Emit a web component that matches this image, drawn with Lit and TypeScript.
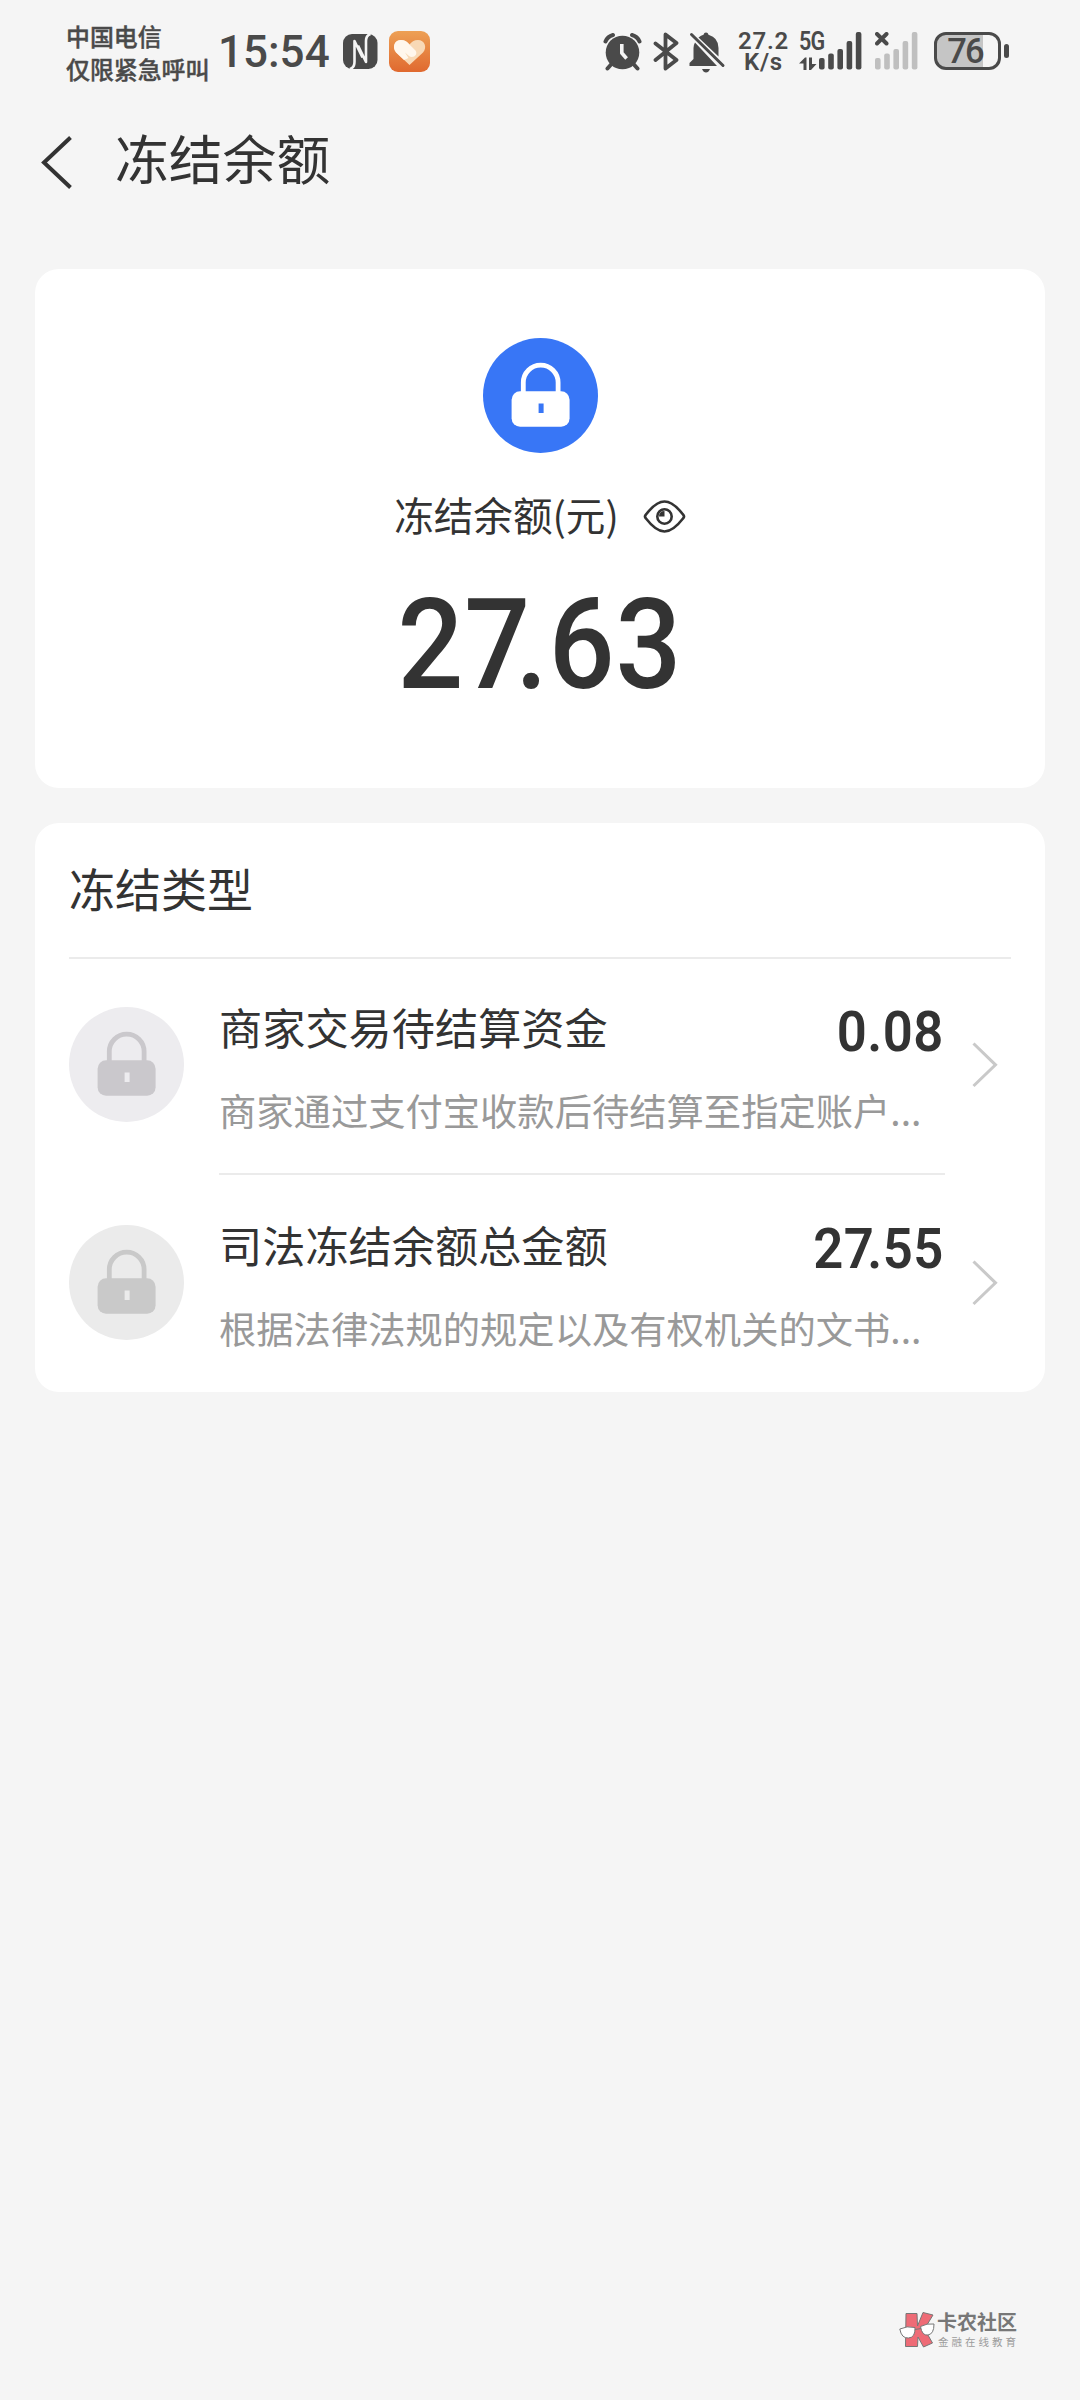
import { LitElement, html, css, svg } from "lit";
import { customElement, property } from "lit/decorators.js";

@customElement("lock-badge")
class LockBadge extends LitElement {
  @property() tone = "blue";
  static styles = css`
    :host { display: block; width: 115px; height: 115px; flex: none; }
    svg { display: block; }
    .blue { --disc: #3876f6; --lock: #ffffff; --hole: #3876f6; }
    .cool { --disc: #edecef; --lock: #cac8cc; --hole: #edecef; }
    .gray { --disc: #ebebeb; --lock: #c9c9c9; --hole: #ebebeb; }
    .disc { fill: var(--disc); }
    .body { fill: var(--lock); }
    .hole { fill: var(--hole); }
    .arc { fill: none; stroke: var(--lock); stroke-width: 4.8; }
  `;
  render() {
    return html`<svg class=${this.tone} width="115" height="115" viewBox="0 0 115 115">
      <circle class="disc" cx="57.5" cy="57.5" r="57.5" />
      <path class="arc" d="M40.3 56V44.5a17.4 17.4 0 0 1 34.8 0V56" />
      <rect class="body" x="28.6" y="53.3" width="58" height="35.5" rx="8.5" />
      <rect class="hole" x="55.6" y="65.5" width="5" height="9.5" />
    </svg>`;
  }
}

@customElement("money-text")
class MoneyText extends LitElement {
  @property() value = "";
  static styles = css`
    :host { display: block; font-family: Roboto, sans-serif; white-space: nowrap; letter-spacing: 0.008em; }
    .tuck { letter-spacing: -0.125em; }
  `;
  render() {
    // A seven before the decimal point is tucked over it.
    const at = this.value.indexOf("7.");
    return at < 0
      ? html`${this.value}`
      : html`${this.value.slice(0, at)}<span class="tuck">7</span>${this.value.slice(at + 1)}`;
  }
}

const bars = svg`
  <rect x="0" y="26" width="5.6" height="11.5" rx="2"/>
  <rect x="9.2" y="21.6" width="5.6" height="15.9" rx="2"/>
  <rect x="18.4" y="17" width="5.6" height="20.5" rx="2"/>
  <rect x="27.6" y="9" width="5.6" height="28.5" rx="2"/>
  <rect x="36.8" y="0" width="5.6" height="37.5" rx="2"/>`;

@customElement("status-bar")
class StatusBar extends LitElement {
  static styles = css`
    :host { display: flex; height: 104px; padding: 0 71px 0 66px; box-sizing: border-box; color: #4a4a4a; align-items: flex-start; }
    svg { display: block; flex: none; }
    .carrier { width: 144px; margin-top: 19px; font: 500 23.9px/33px "Noto Sans CJK SC", sans-serif; white-space: nowrap; -webkit-text-stroke: 0.4px #4a4a4a; }
    .time { margin: 26px 0 0 8px; width: 115px; font: 500 44px/53px Roboto, sans-serif; letter-spacing: 0; }
    .nfc { margin: 34px 0 0 10px; }
    .heart { margin: 31px 0 0 11px; }
    .right { display: flex; margin-left: auto; align-items: flex-start; }
    .alarm { margin-top: 32px; }
    .bt { margin: 32px 0 0 11px; }
    .bell { margin: 32px 0 0 10px; }
    .rate { margin: 31px 0 0 11px; width: 53px; text-align: center; font: 600 24px/21px Roboto, sans-serif; letter-spacing: 0.7px; }
    .net { margin: 29px 0 0 9px; width: 19px; }
    .gen { display: block; font: 600 25px/26px Roboto, sans-serif; letter-spacing: -1px; white-space: nowrap; transform: scaleX(0.86); transform-origin: 0 0; }
    .arrows { margin-top: 2px; }
    .sig { margin: 32px 0 0 1px; }
    .nosig { margin: 32px 0 0 13px; }
    .battery { margin-top: 32px; margin-left: 15px; display: flex; align-items: center; }
    .cell { width: 67px; height: 37.5px; box-sizing: border-box; border: 3.5px solid #4a4a4a; border-radius: 12px;
      background: linear-gradient(to right, #c5c5c5 46px, transparent 46px); padding-right: 5px; text-align: center;
      font: 500 34.5px/32px Roboto, sans-serif; letter-spacing: -1.8px; }
    .nub { width: 5px; height: 14px; border-radius: 2.5px; background: #4a4a4a; margin-left: 3px; }
  `;
  render() {
    return html`
      <div class="carrier">中国电信<br />仅限紧急呼叫</div>
      <div class="time">15:54</div>
      <svg class="nfc" width="35" height="35" viewBox="0 0 35 35">
        <rect width="34.5" height="35" rx="9" fill="#4a4a4a" />
        <path d="M7 35Q11.500 33.500 11.500 28V7L19.500 23.500M27.500 0Q23 1.500 23 7V28L15 11.500" fill="none" stroke="#f5f5f5" stroke-width="2.600" stroke-linejoin="round" />
      </svg>
      <svg class="heart" width="41" height="41" viewBox="0 0 41 41">
        <defs><linearGradient id="o" x1="0" y1="0" x2="0" y2="1"><stop offset="0" stop-color="#eda055" /><stop offset="1" stop-color="#e0692f" /></linearGradient></defs>
        <rect width="41" height="41" rx="9" fill="url(#o)" />
        <path d="M20.500 34L7.300 21.500C2.500 15.500 6 9 12 9c4 0 6.500 2 8.500 4.500C22.500 11 25 9 29 9c6.500 0 9.500 7 5 12.500z" fill="#f8d9b6" />
        <path d="M7 21.500C2.500 15.500 6 9 12 9c3.500 0 5.500 1.500 7.500 3.500l7 7c3 4-2.500 8.500-6.500 5.500l-4-3.500 3.500 5.500-4.500 2z" fill="#fff7ed" />
      </svg>
      <div class="right">
        <svg class="alarm" width="39" height="39" viewBox="0 0 39 39" fill="none" stroke="#4a4a4a" stroke-linecap="round">
          <circle cx="19.500" cy="20.500" r="16.800" fill="#4a4a4a" stroke="none" />
          <path d="M8.500 32l-4 4.500M30.500 32l4 4.500" stroke-width="4" />
          <path d="M2.500 9.500Q4.500 4.500 10 3M36.500 9.500Q34.500 4.500 29 3" stroke-width="4" />
          <path d="M18.800 12v9l4.800 5.500" stroke="#f5f5f5" stroke-width="3.600" stroke-linecap="butt" stroke-linejoin="round" />
        </svg>
        <svg class="bt" width="26" height="39" viewBox="0 0 26 39" fill="none" stroke="#4a4a4a" stroke-width="3.800" stroke-linejoin="round" stroke-linecap="round">
          <path d="M2.500 11.500L23.500 28 12.500 36.500V2.500L23.500 11 2.500 28" />
        </svg>
        <svg class="bell" width="37" height="41" viewBox="0 0 37 41">
          <path d="M0.500 34V31L4.500 27V16Q4.500 13 6 10.500L28 34z" fill="#4a4a4a" />
          <path d="M9.500 5.500Q12 3.300 14.500 2.700 15 0.500 17 0.500t2.500 2.200Q29.500 5.500 29.500 16v8.500z" fill="#4a4a4a" />
          <path d="M2.500 2.500L34 33.500" stroke="#4a4a4a" stroke-width="3" stroke-linecap="round" />
          <path d="M13 37h8q-1.500 3.500-4 3.500T13 37" fill="#4a4a4a" />
        </svg>
        <div class="rate">27.2<br />K/s</div>
        <div class="net"><span class="gen">5G</span>
          <svg class="arrows" width="18" height="14" viewBox="0 0 18 14" fill="#4a4a4a"><path d="M0 6.500L6 0.500h1.500V13H4.500V6.500zM17.500 7L12 13H10V0.500h3V7z" /></svg>
        </div>
        <svg class="sig" width="43" height="38" viewBox="0 0 43 38" fill="#4a4a4a">${bars}</svg>
        <svg class="nosig" width="44" height="38" viewBox="0 0 44 38" fill="#bfbfbf">${bars}<path d="M2 2l9.500 9.500M11.500 2L2 11.500" stroke="#4a4a4a" stroke-width="4" stroke-linecap="round" /></svg>
        <div class="battery"><div class="cell">76</div><div class="nub"></div></div>
      </div>`;
  }
}

interface FrozenItem { title: string; amount: string; note: string; tone: string; }

@customElement("app-root")
class AppRoot extends LitElement {
  private items: FrozenItem[] = [
    { title: "商家交易待结算资金", amount: "0.08", note: "商家通过支付宝收款后待结算至指定账户...", tone: "cool" },
    { title: "司法冻结余额总金额", amount: "27.55", note: "根据法律法规的规定以及有权机关的文书...", tone: "gray" },
  ];
  static styles = css`
    :host { display: flex; flex-direction: column; width: 1080px; height: 2400px; overflow: hidden; background: #f5f5f5; color: #333;
      font-family: "Noto Sans CJK SC", sans-serif; }
    svg { display: block; flex: none; }
    .nav { display: flex; height: 165px; padding-left: 41px; box-sizing: border-box; align-items: flex-start; }
    .back { margin-top: 32px; }
    .nav-title { margin: 13px 0 0 42px; font-size: 53.8px; line-height: 80px; }
    .card { margin: 0 35px; background: #fff; border-radius: 24px; box-sizing: border-box; }
    .summary { height: 519px; padding-top: 69px; display: flex; flex-direction: column; align-items: center; }
    .label { display: flex; align-items: center; gap: 24px; margin: 31px 0 0 0; height: 60px; font-size: 39.6px; line-height: 60px; }
    .eye { margin-top: 4px; }
    .total { margin-top: 26px; font-size: 126px; font-weight: 500; line-height: 150px; transform: scaleX(0.92); }
    .types { margin-top: 35px; height: 569px; padding: 0 34px; }
    .heading { height: 136px; padding: 29px 0 0 0; box-sizing: border-box; font-size: 46px; line-height: 70px; border-bottom: 2px solid #ebebeb; }
    .row { display: flex; height: 217.5px; box-sizing: border-box; padding-top: 48px; }
    .info { width: 726px; height: 169px; box-sizing: border-box; margin: -1px 0 0 35px; }
    .line { border-bottom: 2px solid #ebebeb; }
    .top { display: flex; justify-content: space-between; height: 60px; margin-top: -8px; }
    .name { font-size: 43.2px; line-height: 56px; }
    .sum { font-size: 56px; font-weight: 560; line-height: 60px; transform: scaleX(0.94); transform-origin: 100% 0; margin: 3.500px 1px 0 0; }
    .note { margin-top: 24px; font-size: 37.300px; line-height: 56px; color: #999; white-space: nowrap; }
    .go { margin: 35px 0 0 26px; }
    .mark { display: flex; margin: auto 0 49px 899px; gap: 2px; height: 40px; }
    .mark-name { font-weight: 700; font-size: 20px; line-height: 24px; color: #777; }
    .mark-sub { font-size: 10.5px; line-height: 14px; letter-spacing: 3px; color: #9c9c9c; margin: 1px 0 0 1px; }
    .mark-text { white-space: nowrap; margin-top: -1px; }
  `;
  render() {
    return html`
      <status-bar></status-bar>
      <div class="nav">
        <svg class="back" width="32" height="54" viewBox="0 0 32 54"><path d="M29.500 1.500L3 26.500 29.500 51.500" fill="none" stroke="#333" stroke-width="4" /></svg>
        <div class="nav-title">冻结余额</div>
      </div>
      <div class="card summary">
        <lock-badge tone="blue"></lock-badge>
        <div class="label"><span>冻结余额(元)</span>
          <svg class="eye" width="43" height="33" viewBox="0 0 43 33" fill="none" stroke="#333" stroke-width="2.600">
            <path d="M3 18.500Q1 16.500 3 14.500Q13 1.500 21.500 1.500T40 14.500Q42 16.500 40 18.500Q30 31.500 21.500 31.500T3 18.500z" />
            <circle cx="21.500" cy="16.500" r="7.200" /><path d="M21.500 11v5.500H16Q16 11 21.500 11" fill="#333" stroke="none" />
          </svg>
        </div>
        <money-text class="total" value="27.63"></money-text>
      </div>
      <div class="card types">
        <div class="heading">冻结类型</div>
        ${this.items.map((it, i) => html`<div class="row">
          <lock-badge tone=${it.tone}></lock-badge>
          <div class="info ${i < this.items.length - 1 ? "line" : ""}">
            <div class="top"><span class="name">${it.title}</span><money-text class="sum" value=${it.amount}></money-text></div>
            <div class="note">${it.note}</div>
          </div>
          <svg class="go" width="28" height="46" viewBox="0 0 28 46"><path d="M2.500 1.500L24.500 22.800 2.500 44" fill="none" stroke="#c9c9c9" stroke-width="3" /></svg>
        </div>`)}
      </div>
      <div class="mark">
        <svg width="36" height="38" viewBox="0 0 36 38" stroke="#777" stroke-width="1">
          <path d="M7 2.500h11l.5 12.500L24 1.500l10 2.500-8.500 14L33.500 32l-9 4-5.500-10-.5 9.500H6.500z" fill="#ee6b76" />
          <path d="M.8 18Q8 14.500 16 16.500q.5 10-6.500 10.500T.8 18zM21.500 15.500Q28 12 35 13q0 10-6 11t-7.500-8.500zM16 18.500l6-1" fill="#fff" />
        </svg>
        <div class="mark-text"><div class="mark-name">卡农社区</div><div class="mark-sub">金融在线教育</div></div>
      </div>`;
  }
}
